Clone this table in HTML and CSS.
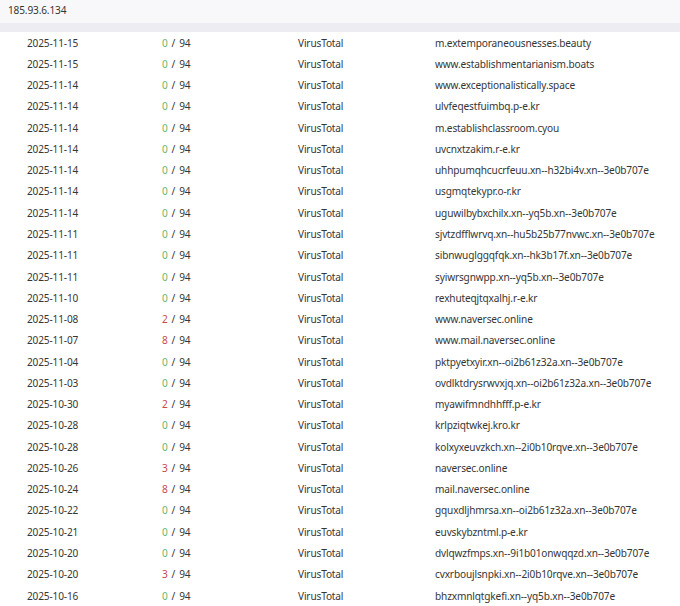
FILE: index.html
```html
<!DOCTYPE html>
<html>
<head>
<meta charset="utf-8">
<link rel="stylesheet" href="styles.css">
</head>
<body>
<div class="top">185.93.6.134</div>
<div class="band"></div>
<div class="table">
  <div class="row"><span>2025-11-15</span><span class="cnt"><b class="ok">0</b> / 94</span><span>VirusTotal</span><span>m.extemporaneousnesses.beauty</span></div>
  <div class="row"><span>2025-11-15</span><span class="cnt"><b class="ok">0</b> / 94</span><span>VirusTotal</span><span>www.establishmentarianism.boats</span></div>
  <div class="row"><span>2025-11-14</span><span class="cnt"><b class="ok">0</b> / 94</span><span>VirusTotal</span><span>www.exceptionalistically.space</span></div>
  <div class="row"><span>2025-11-14</span><span class="cnt"><b class="ok">0</b> / 94</span><span>VirusTotal</span><span>ulvfeqestfuimbq.p-e.kr</span></div>
  <div class="row"><span>2025-11-14</span><span class="cnt"><b class="ok">0</b> / 94</span><span>VirusTotal</span><span>m.establishclassroom.cyou</span></div>
  <div class="row"><span>2025-11-14</span><span class="cnt"><b class="ok">0</b> / 94</span><span>VirusTotal</span><span>uvcnxtzakim.r-e.kr</span></div>
  <div class="row"><span>2025-11-14</span><span class="cnt"><b class="ok">0</b> / 94</span><span>VirusTotal</span><span>uhhpumqhcucrfeuu.xn--h32bi4v.xn--3e0b707e</span></div>
  <div class="row"><span>2025-11-14</span><span class="cnt"><b class="ok">0</b> / 94</span><span>VirusTotal</span><span>usgmqtekypr.o-r.kr</span></div>
  <div class="row"><span>2025-11-14</span><span class="cnt"><b class="ok">0</b> / 94</span><span>VirusTotal</span><span>uguwilbybxchilx.xn--yq5b.xn--3e0b707e</span></div>
  <div class="row"><span>2025-11-11</span><span class="cnt"><b class="ok">0</b> / 94</span><span>VirusTotal</span><span>sjvtzdfflwrvq.xn--hu5b25b77nvwc.xn--3e0b707e</span></div>
  <div class="row"><span>2025-11-11</span><span class="cnt"><b class="ok">0</b> / 94</span><span>VirusTotal</span><span>sibnwuglggqfqk.xn--hk3b17f.xn--3e0b707e</span></div>
  <div class="row"><span>2025-11-11</span><span class="cnt"><b class="ok">0</b> / 94</span><span>VirusTotal</span><span>syiwrsgnwpp.xn--yq5b.xn--3e0b707e</span></div>
  <div class="row"><span>2025-11-10</span><span class="cnt"><b class="ok">0</b> / 94</span><span>VirusTotal</span><span>rexhuteqjtqxalhj.r-e.kr</span></div>
  <div class="row"><span>2025-11-08</span><span class="cnt"><b class="bad">2</b> / 94</span><span>VirusTotal</span><span>www.naversec.online</span></div>
  <div class="row"><span>2025-11-07</span><span class="cnt"><b class="bad">8</b> / 94</span><span>VirusTotal</span><span>www.mail.naversec.online</span></div>
  <div class="row"><span>2025-11-04</span><span class="cnt"><b class="ok">0</b> / 94</span><span>VirusTotal</span><span>pktpyetxyir.xn--oi2b61z32a.xn--3e0b707e</span></div>
  <div class="row"><span>2025-11-03</span><span class="cnt"><b class="ok">0</b> / 94</span><span>VirusTotal</span><span>ovdlktdrysrwvxjq.xn--oi2b61z32a.xn--3e0b707e</span></div>
  <div class="row"><span>2025-10-30</span><span class="cnt"><b class="bad">2</b> / 94</span><span>VirusTotal</span><span>myawifmndhhfff.p-e.kr</span></div>
  <div class="row"><span>2025-10-28</span><span class="cnt"><b class="ok">0</b> / 94</span><span>VirusTotal</span><span>krlpziqtwkej.kro.kr</span></div>
  <div class="row"><span>2025-10-28</span><span class="cnt"><b class="ok">0</b> / 94</span><span>VirusTotal</span><span>kolxyxeuvzkch.xn--2i0b10rqve.xn--3e0b707e</span></div>
  <div class="row"><span>2025-10-26</span><span class="cnt"><b class="bad">3</b> / 94</span><span>VirusTotal</span><span>naversec.online</span></div>
  <div class="row"><span>2025-10-24</span><span class="cnt"><b class="bad">8</b> / 94</span><span>VirusTotal</span><span>mail.naversec.online</span></div>
  <div class="row"><span>2025-10-22</span><span class="cnt"><b class="ok">0</b> / 94</span><span>VirusTotal</span><span>gquxdljhmrsa.xn--oi2b61z32a.xn--3e0b707e</span></div>
  <div class="row"><span>2025-10-21</span><span class="cnt"><b class="ok">0</b> / 94</span><span>VirusTotal</span><span>euvskybzntml.p-e.kr</span></div>
  <div class="row"><span>2025-10-20</span><span class="cnt"><b class="ok">0</b> / 94</span><span>VirusTotal</span><span>dvlqwzfmps.xn--9i1b01onwqqzd.xn--3e0b707e</span></div>
  <div class="row"><span>2025-10-20</span><span class="cnt"><b class="bad">3</b> / 94</span><span>VirusTotal</span><span>cvxrboujlsnpki.xn--2i0b10rqve.xn--3e0b707e</span></div>
  <div class="row"><span>2025-10-16</span><span class="cnt"><b class="ok">0</b> / 94</span><span>VirusTotal</span><span>bhzxmnlqtgkefi.xn--yq5b.xn--3e0b707e</span></div>
</div>
</body>
</html>
```
FILE: styles.css
```css
html, body {
  margin: 0;
  padding: 0;
  background: #ffffff;
}
body {
  font-family: "Noto Sans", "Open Sans", sans-serif;
  font-size: 10.1px;
  letter-spacing: -0.15px;
  color: #363636;
  overflow: hidden;
}
.top {
  height: 23px;
  line-height: 21px;
  padding-left: 8px;
  background: #f8f8fa;
}
.band {
  height: 9px;
  background: #ececf2;
}
.table {
  display: grid;
  grid-auto-rows: 21.27px;
}
.row {
  display: grid;
  grid-template-columns: 135px 136px 137px 1fr;
  padding-left: 27px;
  align-items: center;
  white-space: nowrap;
}
.cnt {
  word-spacing: 1.5px;
}
.row b {
  font-weight: normal;
}
.ok {
  color: #6cb56c;
}
.bad {
  color: #c8484c;
}
```
